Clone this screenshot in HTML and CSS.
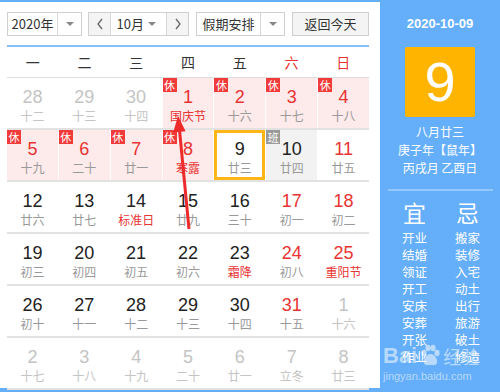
FILE: index.html
```html
<html lang="zh">
<head>
    <meta charset="UTF-8">
    <title>万年历</title>
    <link rel="stylesheet" href="styles.css">
</head>
<body>
    <div class="page">
        <!-- calendar -->
        <div class="main">
            <div class="toolbar">
                <div class="sel year"><span class="txt">2020年</span><span class="drop"><i class="tri"></i></span></div>
                <div class="sel month">
                    <span class="nav"><svg width="8" height="12" viewBox="0 0 8 12"><polyline points="6,1 2,6 6,11" fill="none" stroke="#666" stroke-width="1.3"/></svg></span>
                    <span class="txt">10月</span><span class="tri-wrap"><i class="tri"></i></span>
                    <span class="nav"><svg width="8" height="12" viewBox="0 0 8 12"><polyline points="2,1 6,6 2,11" fill="none" stroke="#666" stroke-width="1.3"/></svg></span>
                </div>
                <div class="sel holiday"><span class="txt">假期安排</span><span class="drop"><i class="tri"></i></span></div>
                <div class="btn">返回今天</div>
            </div>
            <div class="rule"></div>
            <div class="week">
                <span>一</span><span>二</span><span>三</span><span>四</span><span>五</span><span class="red">六</span><span class="red">日</span>
            </div>
            <div class="grid">
                <div class="row">
                    <div class="day other"><b>28</b><em>十二</em></div>
                    <div class="day other"><b>29</b><em>十三</em></div>
                    <div class="day other"><b>30</b><em>十四</em></div>
                    <div class="day rest"><i class="tag">休</i><b>1</b><em class="fest">国庆节</em></div>
                    <div class="day rest"><i class="tag">休</i><b>2</b><em>十六</em></div>
                    <div class="day rest"><i class="tag">休</i><b>3</b><em>十七</em></div>
                    <div class="day rest"><i class="tag">休</i><b>4</b><em>十八</em></div>
                </div>
                <div class="row">
                    <div class="day rest"><i class="tag">休</i><b>5</b><em>十九</em></div>
                    <div class="day rest"><i class="tag">休</i><b>6</b><em>二十</em></div>
                    <div class="day rest"><i class="tag">休</i><b>7</b><em>廿一</em></div>
                    <div class="day rest"><i class="tag">休</i><b>8</b><em class="fest">寒露</em></div>
                    <div class="day today"><b>9</b><em>廿三</em></div>
                    <div class="day work"><i class="tag gray">班</i><b>10</b><em>廿四</em></div>
                    <div class="day wkend"><b>11</b><em>廿五</em></div>
                </div>
                <div class="row">
                    <div class="day"><b>12</b><em>廿六</em></div>
                    <div class="day"><b>13</b><em>廿七</em></div>
                    <div class="day"><b>14</b><em class="fest">标准日</em></div>
                    <div class="day"><b>15</b><em>廿九</em></div>
                    <div class="day"><b>16</b><em>三十</em></div>
                    <div class="day wkend"><b>17</b><em>初一</em></div>
                    <div class="day wkend"><b>18</b><em>初二</em></div>
                </div>
                <div class="row">
                    <div class="day"><b>19</b><em>初三</em></div>
                    <div class="day"><b>20</b><em>初四</em></div>
                    <div class="day"><b>21</b><em>初五</em></div>
                    <div class="day"><b>22</b><em>初六</em></div>
                    <div class="day"><b>23</b><em class="fest">霜降</em></div>
                    <div class="day wkend"><b>24</b><em>初八</em></div>
                    <div class="day wkend"><b>25</b><em class="fest">重阳节</em></div>
                </div>
                <div class="row">
                    <div class="day"><b>26</b><em>初十</em></div>
                    <div class="day"><b>27</b><em>十一</em></div>
                    <div class="day"><b>28</b><em>十二</em></div>
                    <div class="day"><b>29</b><em>十三</em></div>
                    <div class="day"><b>30</b><em>十四</em></div>
                    <div class="day wkend"><b>31</b><em>十五</em></div>
                    <div class="day other"><b>1</b><em>十六</em></div>
                </div>
                <div class="row">
                    <div class="day other"><b>2</b><em>十七</em></div>
                    <div class="day other"><b>3</b><em>十八</em></div>
                    <div class="day other"><b>4</b><em>十九</em></div>
                    <div class="day other"><b>5</b><em>二十</em></div>
                    <div class="day other"><b>6</b><em>廿一</em></div>
                    <div class="day other"><b>7</b><em>立冬</em></div>
                    <div class="day other"><b>8</b><em>廿三</em></div>
                </div>
            </div>
        </div>

        <!-- side panel -->
        <div class="side">
            <div class="date">2020-10-09</div>
            <div class="bigday">9</div>
            <div class="lunar">
                <p>八月廿三</p>
                <p>庚子年【鼠年】</p>
                <p>丙戌月 乙酉日</p>
            </div>
            <div class="sep"></div>
            <div class="yiji">
                <div class="col">
                    <h3>宜</h3>
                    <p>开业</p><p>结婚</p><p>领证</p><p>开工</p><p>安床</p><p>安葬</p><p>开张</p><p>作业</p>
                </div>
                <div class="col">
                    <h3>忌</h3>
                    <p>搬家</p><p>装修</p><p>入宅</p><p>动土</p><p>出行</p><p>旅游</p><p>破土</p><p>修造</p>
                </div>
            </div>
        </div>

        <!-- annotation arrow -->
        <svg class="arrow" width="500" height="392" viewBox="0 0 500 392">
            <line x1="189" y1="229" x2="179.6" y2="131" stroke="#ee2b2b" stroke-width="3"/>
            <polygon points="178,116 185.6,131.2 173.2,132.4" fill="#ee2b2b"/>
        </svg>

        <!-- watermark -->
        <div class="mark">
            <div class="mark-top">
                <span class="bai">Bai</span>
                <svg width="24" height="24" viewBox="0 0 24 24">
                    <ellipse cx="6" cy="9" rx="2.6" ry="3.2"/>
                    <ellipse cx="10" cy="4" rx="2.6" ry="3.2"/>
                    <ellipse cx="15" cy="4" rx="2.6" ry="3.2"/>
                    <ellipse cx="19" cy="9" rx="2.6" ry="3.2"/>
                    <path d="M12.5 10 C8 10 5 16 6 19 C7 22 10 21 12.5 21 C15 21 18 22 19 19 C20 16 17 10 12.5 10 Z"/>
                </svg>
                <span class="jy">经验</span>
            </div>
            <div class="mark-url">jingyan.baidu.com</div>
        </div>
    </div>
</body>
</html>
```

FILE: styles.css
```css
* {
    box-sizing: border-box;
}

body {
    margin: 0;
    background: #64aefa;
    font-family: "Noto Sans CJK SC", "Noto Sans", sans-serif;
}

p, h3 {
    margin: 0;
}

.page {
    position: relative;
    display: flex;
    width: 500px;
    height: 392px;
    padding: 2px 0 4px;
}

.main {
    width: 380px;
    background: #fff;
    padding: 10px 11px 0 7px;
}

/* toolbar */
.toolbar {
    display: flex;
    height: 24px;
    font-size: 13px;
    color: #333;
}

.sel, .btn {
    display: flex;
    align-items: stretch;
    height: 24px;
    border: 1px solid #cfcfcf;
    background: #fff;
    line-height: 22px;
}

.year {
    width: 75px;
}

.month {
    width: 101px;
    margin-left: 6px;
}

.holiday {
    width: 89px;
    margin-left: 7px;
}

.btn {
    width: 77px;
    margin-left: 7px;
    justify-content: center;
    background: #f4f4f4;
    color: #333;
}

.txt {
    flex: 1;
    text-align: center;
}

.drop {
    width: 24px;
    border-left: 1px solid #d8d8d8;
    display: flex;
    align-items: center;
    justify-content: center;
}

.month .txt {
    text-align: right;
    padding-right: 4px;
}

.tri-wrap {
    width: 18px;
    display: flex;
    align-items: center;
}

.tri {
    width: 0;
    height: 0;
    border-left: 4px solid transparent;
    border-right: 4px solid transparent;
    border-top: 4px solid #888;
}

.nav {
    width: 22px;
    background: #f4f4f4;
    display: flex;
    align-items: center;
    justify-content: center;
}

.nav:first-child {
    border-right: 1px solid #d8d8d8;
}

.nav:last-child {
    border-left: 1px solid #d8d8d8;
}

.rule {
    margin-top: 9px;
    width: 362px;
    height: 2px;
    background: #86bef5;
}

/* week header */
.week {
    display: grid;
    grid-template-columns: repeat(7, 1fr);
    width: 362px;
    height: 31px;
    align-items: center;
    border-bottom: 1px solid #ddd;
    font-size: 14px;
    color: #333;
    text-align: center;
}

.red {
    color: #e83333;
}

/* days */
.grid {
    width: 362px;
}

.row {
    display: grid;
    grid-template-columns: repeat(7, 1fr);
    column-gap: 1px;
    height: 52px;
    border-bottom: 2px solid #e2e2e2;
}

.day {
    position: relative;
    display: flex;
    flex-direction: column;
    align-items: center;
    padding-top: 8px;
}

.day b {
    font-family: "Liberation Sans", Arial, sans-serif;
    font-weight: normal;
    font-size: 18px;
    line-height: 22px;
    color: #222;
}

.day em {
    font-style: normal;
    font-size: 12px;
    line-height: 16px;
    color: #999;
}

.day em.fest {
    color: #e83333;
}

.rest {
    background: #fdeaea;
}

.rest b, .wkend b {
    color: #e83333;
}

.other b, .other em {
    color: #c4c4c4;
}

.work {
    background: #f2f2f2;
}

.today {
    border: 3px solid #fdb615;
    padding-top: 5px;
}

.tag {
    position: absolute;
    top: 0;
    left: 0;
    width: 14px;
    height: 14px;
    background: #f13b3b;
    color: #fff;
    font-style: normal;
    font-size: 11px;
    line-height: 14px;
    text-align: center;
}

.tag.gray {
    background: #9a9a9a;
}

/* right panel */
.side {
    flex: 1;
    display: flex;
    flex-direction: column;
    align-items: center;
    color: #fff;
    padding-top: 12px;
}

.date {
    font-family: "Liberation Sans", Arial, sans-serif;
    font-size: 13px;
    font-weight: bold;
    height: 20px;
    line-height: 20px;
}

.bigday {
    margin-top: 13px;
    width: 70px;
    height: 70px;
    background: #ffb400;
    border-radius: 2px;
    font-family: "Liberation Sans", Arial, sans-serif;
    font-size: 56px;
    line-height: 70px;
    text-align: center;
}

.lunar {
    margin-top: 6px;
    text-align: center;
    font-size: 12px;
    line-height: 18px;
}

.sep {
    margin-top: 12px;
    width: 105px;
    height: 2px;
    background: #95c8fb;
}

.yiji {
    display: flex;
    gap: 28px;
    margin-top: 6px;
    padding-left: 2px;
}

.col {
    display: flex;
    flex-direction: column;
    align-items: center;
}

.col h3 {
    font-size: 23px;
    font-weight: normal;
    line-height: 30px;
    margin-bottom: 2px;
}

.col p {
    font-size: 12.5px;
    line-height: 17px;
}

/* overlays */
.arrow {
    position: absolute;
    top: 0;
    left: 0;
    pointer-events: none;
}

.mark {
    position: absolute;
    left: 383px;
    top: 343px;
    color: rgba(255, 255, 255, 0.55);
    pointer-events: none;
}

.mark-top {
    display: flex;
    align-items: center;
}

.mark-top svg {
    fill: rgba(255, 255, 255, 0.55);
    margin: 0 1px;
}

.bai {
    font-family: "Liberation Sans", Arial, sans-serif;
    font-weight: bold;
    font-size: 22px;
    line-height: 26px;
}

.jy {
    font-size: 18px;
    line-height: 26px;
}

.mark-url {
    font-family: "Liberation Sans", Arial, sans-serif;
    font-size: 11px;
    line-height: 14px;
}
```
